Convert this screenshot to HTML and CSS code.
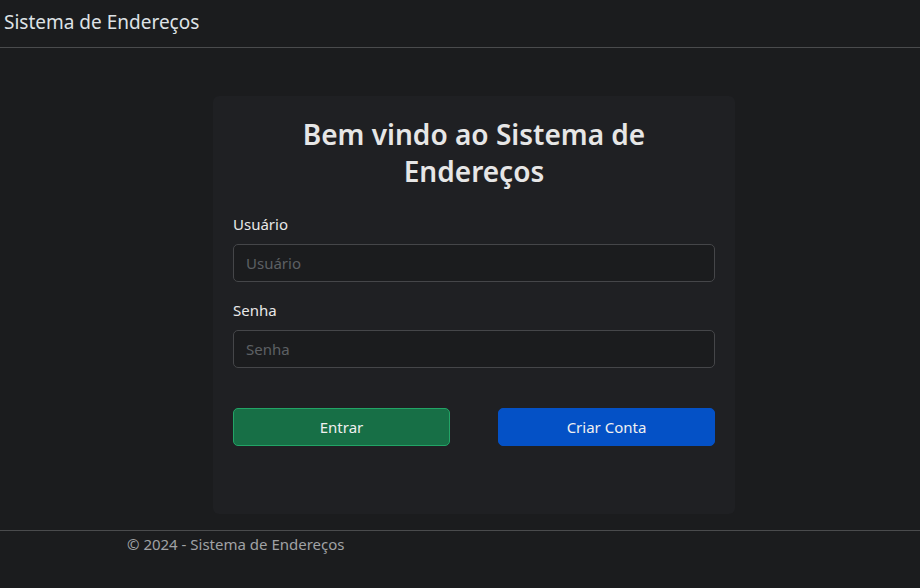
FILE: index.html
```html
<!DOCTYPE html>
<html lang="pt-BR">
<head>
<meta charset="utf-8">
<title>Sistema de Endereços</title>
<link rel="stylesheet" href="styles.css">
</head>
<body>
<header class="navbar">
  <a class="brand" href="#">Sistema de Endereços</a>
</header>
<main class="main">
  <section class="card">
    <h1 class="title">Bem vindo ao Sistema de Endereços</h1>
    <form class="form">
      <div class="field">
        <label class="label" for="u">Usuário</label>
        <input class="input" id="u" type="text" placeholder="Usuário">
      </div>
      <div class="field">
        <label class="label" for="s">Senha</label>
        <input class="input" id="s" type="password" placeholder="Senha">
      </div>
      <div class="actions">
        <button type="button" class="btn btn-success">Entrar</button>
        <button type="button" class="btn btn-primary">Criar Conta</button>
      </div>
    </form>
  </section>
</main>
<footer class="footer">
  <div class="footer-inner">© 2024 - Sistema de Endereços</div>
</footer>
</body>
</html>
```
FILE: styles.css
```css
* { box-sizing: border-box; }
html, body { margin: 0; padding: 0; }
body {
  background: #1b1c1e;
  color: #dee2e6;
  font-family: "Noto Sans", "Open Sans", sans-serif;
  font-size: 16px;
  height: 588px;
  overflow: hidden;
}
.navbar {
  height: 48px;
  border-bottom: 1px solid #4a4b4d;
  display: flex;
  align-items: center;
  padding: 0 4px 4px;
}
.brand {
  color: #dee2e6;
  text-decoration: none;
  font-size: 19px;
}
.main {
  display: flex;
  justify-content: center;
  padding: 48px 0 0 28px;
  height: 482px;
}
.card {
  width: 522px;
  height: 418px;
  background: #1f2023;
  border-radius: 6px;
  padding: 20px 20px 20px;
}
.title {
  margin: 0 0 22px;
  text-align: center;
  font-weight: 600;
  font-size: 28px;
  line-height: 37px;
  padding: 0 30px;
  color: #e6e6e6;
}
.form { display: flex; flex-direction: column; }
.field { display: flex; flex-direction: column; margin-bottom: 16px; }
.label {
  font-size: 15px;
  line-height: 24px;
  margin-bottom: 8px;
  color: #e8e8e8;
}
.input {
  height: 38px;
  background: #1b1c1e;
  border: 1px solid #454649;
  border-radius: 5px;
  color: #dee2e6;
  font: inherit;
  font-size: 15px;
  padding: 0 12px;
  outline: none;
}
.input::placeholder { color: #5d6064; }
.actions {
  display: grid;
  grid-template-columns: 217px 217px;
  justify-content: space-between;
  margin-top: 24px;
}
.btn {
  height: 38px;
  border-radius: 5px;
  font: inherit;
  font-size: 15px;
  color: #f0f0f0;
  cursor: pointer;
}
.btn-success { background: #176f46; border: 1px solid #22a466; }
.btn-primary { background: #0451c6; border: 1px solid #0451c6; }
.footer {
  border-top: 1px solid #4a4b4d;
}
.footer-inner {
  padding: 3px 0 0 127px;
  color: #a0a2a5;
  font-size: 15px;
  line-height: 20px;
}
```
